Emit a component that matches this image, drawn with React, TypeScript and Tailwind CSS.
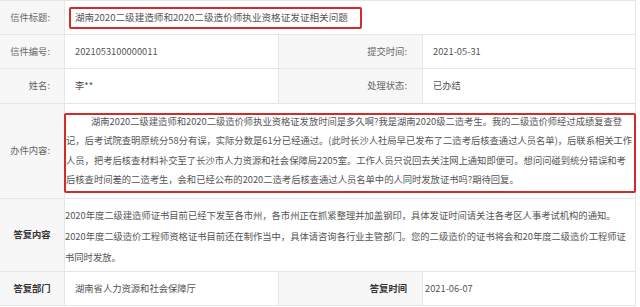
const font = { fontFamily: '"Noto Sans CJK SC", "Noto Sans", sans-serif' };

function Label({ children, className = "" }: { children: React.ReactNode; className?: string }) {
  return (
    <div className={`w-[65px] shrink-0 bg-[#f7f7f7] border-r border-[#e6e6e6] flex items-center justify-end pr-[14px] text-[#666] ${className}`}>
      {children}
    </div>
  );
}

const question = [
  "湖南2020二级建造师和2020二级造价师执业资格证发放时间是多久啊?我是湖南2020级二造考生。我的二级造价师经过成绩复查登",
  "记，后考试院查明原统分58分有误，实际分数是61分已经通过。(此时长沙人社局早已发布了二造考后核查通过人员名单)，后联系相关工作",
  "人员，把考后核查材料补交至了长沙市人力资源和社会保障局2205室。工作人员只说回去关注网上通知即便可。想问问碰到统分错误和考",
  "后核查时间差的二造考生，会和已经公布的2020二造考后核查通过人员名单中的人同时发放证书吗?期待回复。",
];

const answer = [
  "2020年度二级建造师证书目前已经下发至各市州，各市州正在抓紧整理并加盖钢印，具体发证时间请关注各考区人事考试机构的通知。",
  "2020年度二级造价工程师资格证书目前还在制作当中，具体请咨询各行业主管部门。您的二级造价的证书将会和20年度二级造价工程师证",
  "书同时发放。",
];

export default function App() {
  return (
    <div className="w-[640px] h-[307px] bg-white overflow-hidden text-[9.3px]" style={font}>
      <div className="w-[636px] border-t border-r border-[#e6e6e6]">
        {/* 信件标题 */}
        <div className="flex h-[34px] border-b border-[#e6e6e6]">
          <Label>信件标题:</Label>
          <div className="flex-1 flex items-center pl-[4px]">
            <div className="w-[293px] h-[22px] border-2 border-[#d42a2a] rounded-[2px] flex items-center pl-[4px] text-[9.6px] text-[#555] whitespace-nowrap">
              湖南2020二级建造师和2020二级造价师执业资格证发证相关问题
            </div>
          </div>
        </div>

        {/* 信件编号 / 提交时间 */}
        <div className="flex h-[34px] border-b border-[#e6e6e6]">
          <Label>信件编号:</Label>
          <div className="w-[214px] flex items-center pl-[10px] text-[#555] border-r border-[#e6e6e6]">2021053100000011</div>
          <div className="w-[144px] bg-[#f7f7f7] border-r border-[#e6e6e6] flex items-center justify-end pr-[15px] text-[#666]">提交时间:</div>
          <div className="flex-1 flex items-center pl-[10px] text-[#555]">2021-05-31</div>
        </div>

        {/* 姓名 / 处理状态 */}
        <div className="flex h-[35px] border-b border-[#e6e6e6]">
          <Label>姓名:</Label>
          <div className="w-[214px] flex items-center pl-[10px] text-[#555] border-r border-[#e6e6e6]">李**</div>
          <div className="w-[144px] bg-[#f7f7f7] border-r border-[#e6e6e6] flex items-center justify-end pr-[15px] text-[#666]">处理状态:</div>
          <div className="flex-1 flex items-center pl-[10px] text-[#555]">已办结</div>
        </div>

        {/* 办件内容 */}
        <div className="flex h-[95px] border-b border-[#e6e6e6]">
          <Label>办件内容:</Label>
          <div className="flex-1 pt-[9px]">
            <div className="w-[572px] h-[80px] -ml-[1px] border-2 border-[#d42a2a] rounded-[2px] text-[#555] leading-[19.3px] whitespace-nowrap">
              <div className="-mt-[3px]">
                {question.map((line, i) => (
                  <div key={i} className={i === 0 ? "pl-[25px]" : ""}>{line}</div>
                ))}
              </div>
            </div>
          </div>
        </div>

        {/* 答复内容 */}
        <div className="flex h-[73px] border-b border-[#e6e6e6]">
          <div className="w-[65px] shrink-0 bg-[#f7f7f7] border-r border-[#e6e6e6] flex items-center justify-center font-bold text-[#333]">答复内容</div>
          <div className="flex-1 pt-[6px] leading-[21px] text-[#555] whitespace-nowrap">
            {answer.map((line, i) => (
              <div key={i}>{line}</div>
            ))}
          </div>
        </div>

        {/* 答复部门 / 答复时间 */}
        <div className="flex h-[34px] border-b border-[#e6e6e6]">
          <div className="w-[65px] shrink-0 bg-[#f7f7f7] border-r border-[#e6e6e6] flex items-center justify-center font-bold text-[#333]">答复部门</div>
          <div className="w-[214px] flex items-center pl-[10px] text-[#555] border-r border-[#e6e6e6]">湖南省人力资源和社会保障厅</div>
          <div className="w-[144px] bg-[#f7f7f7] border-r border-[#e6e6e6] flex items-center justify-end pr-[15px] font-bold text-[#333]">答复时间</div>
          <div className="flex-1 flex items-center pl-[2px] text-[#555]">2021-06-07</div>
        </div>
      </div>
    </div>
  );
}
